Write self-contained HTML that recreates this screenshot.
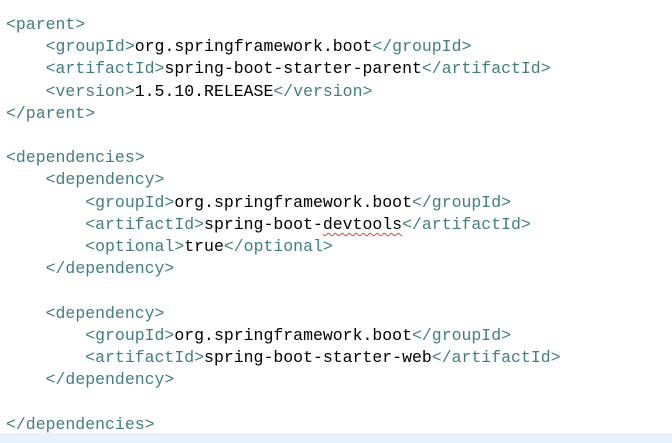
<!DOCTYPE html>
<html><head><style>
html,body{margin:0;padding:0;background:#fff;width:672px;height:443px;overflow:hidden}
pre{margin:0;position:absolute;left:6px;top:14px;font-family:"Liberation Mono",monospace;font-size:16.5px;line-height:22.2px;color:#000}
.t{color:#3f7f7f}
.sq{text-decoration:underline wavy #d44;text-decoration-thickness:1px;text-underline-offset:3px}
.hl{position:absolute;left:0;top:433px;width:672px;height:10px;background:#e8f2fe}
</style></head><body>
<div class="hl"></div>
<pre><span class="t">&lt;parent&gt;</span>
    <span class="t">&lt;groupId&gt;</span>org.springframework.boot<span class="t">&lt;/groupId&gt;</span>
    <span class="t">&lt;artifactId&gt;</span>spring-boot-starter-parent<span class="t">&lt;/artifactId&gt;</span>
    <span class="t">&lt;version&gt;</span>1.5.10.RELEASE<span class="t">&lt;/version&gt;</span>
<span class="t">&lt;/parent&gt;</span>

<span class="t">&lt;dependencies&gt;</span>
    <span class="t">&lt;dependency&gt;</span>
        <span class="t">&lt;groupId&gt;</span>org.springframework.boot<span class="t">&lt;/groupId&gt;</span>
        <span class="t">&lt;artifactId&gt;</span>spring-boot-<span class="sq">devtools</span><span class="t">&lt;/artifactId&gt;</span>
        <span class="t">&lt;optional&gt;</span>true<span class="t">&lt;/optional&gt;</span>
    <span class="t">&lt;/dependency&gt;</span>

    <span class="t">&lt;dependency&gt;</span>
        <span class="t">&lt;groupId&gt;</span>org.springframework.boot<span class="t">&lt;/groupId&gt;</span>
        <span class="t">&lt;artifactId&gt;</span>spring-boot-starter-web<span class="t">&lt;/artifactId&gt;</span>
    <span class="t">&lt;/dependency&gt;</span>

<span class="t">&lt;/dependencies&gt;</span></pre>
</body></html>
